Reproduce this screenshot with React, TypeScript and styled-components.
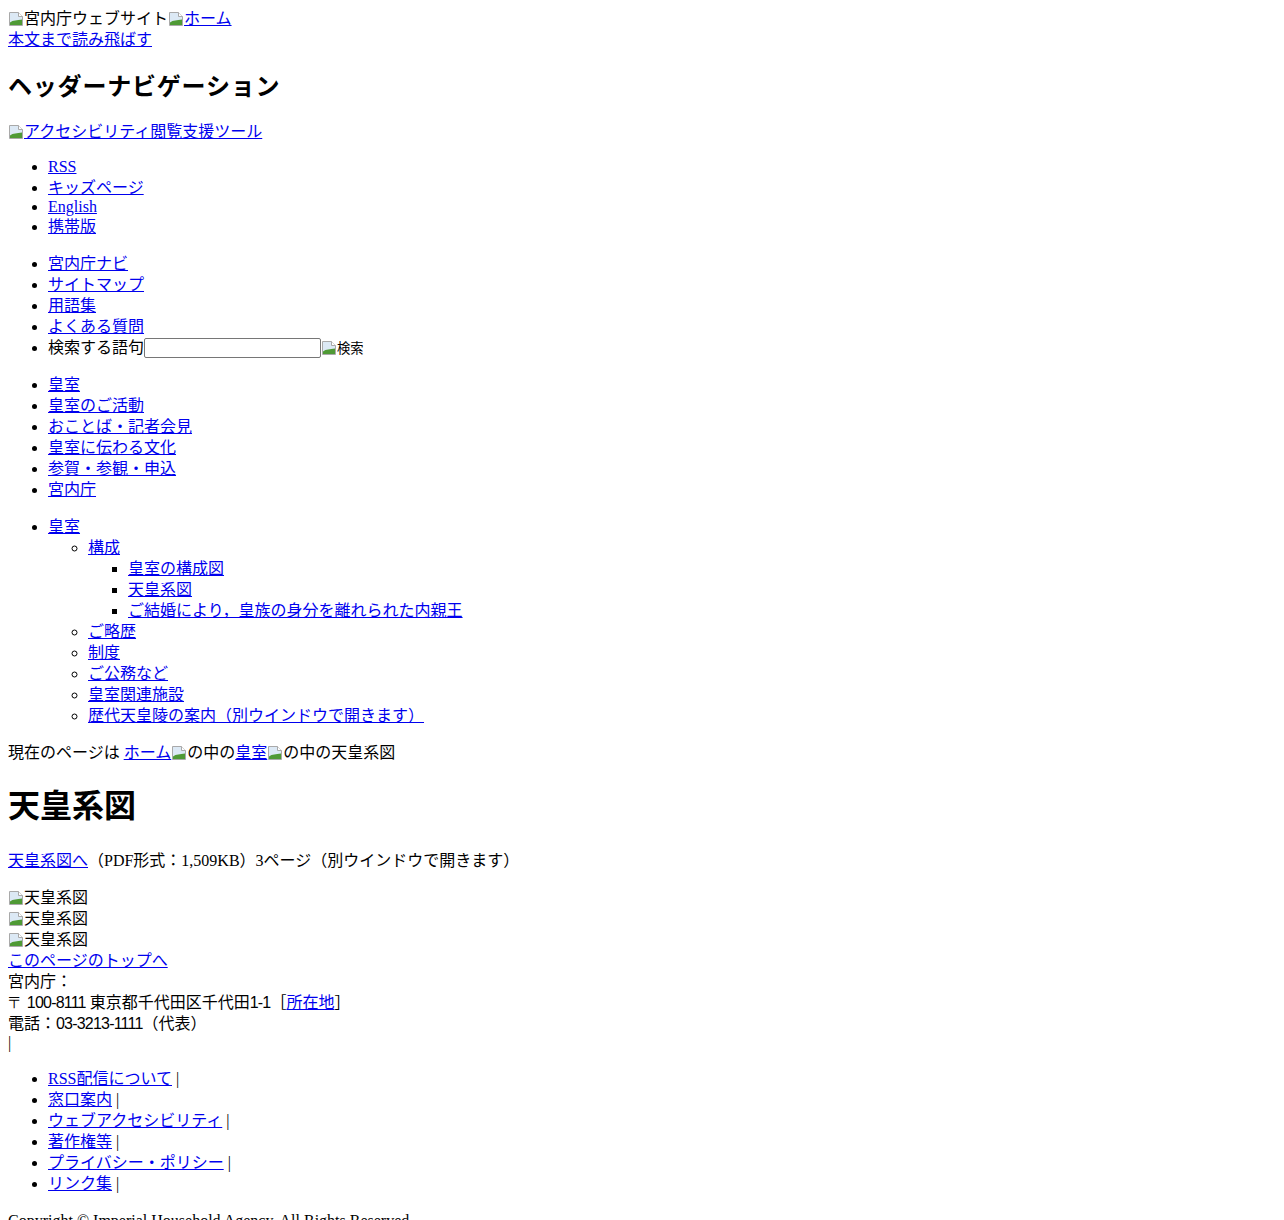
import { createGlobalStyle, styled } from "styled-components";

const GlobalStyle = createGlobalStyle`
  body {
    margin: 8px;
    font-family: "Liberation Serif", "Noto Sans CJK JP", serif;
    font-size: 16px;
    line-height: 1.3125;
    color: #000000;
    background: #ffffff;
  }
`;

const mainNav = ["皇室", "皇室のご活動", "おことば・記者会見", "皇室に伝わる文化", "参賀・参観・申込", "宮内庁"];

const subNav = ["ご略歴", "制度", "ご公務など", "皇室関連施設", "歴代天皇陵の案内（別ウインドウで開きます）"];

const footerLinks = ["RSS配信について", "窓口案内", "ウェブアクセシビリティ", "著作権等", "プライバシー・ポリシー", "リンク集"];

function BrokenIcon() {
  return (
    <svg width="16" height="16" viewBox="0 0 16 16" aria-hidden="true">
      <path d="M1.5 1.5H10.5L14.5 5.5V14.5H1.5Z" fill="#dce9f5" stroke="#a9a9a9" />
      <path d="M10.5 1.5V5.5H14.5" fill="#ffffff" stroke="#a9a9a9" />
      <path d="M2 14V11.5C5 9 9 9.5 14 8.5V14Z" fill="#4f9a35" />
    </svg>
  );
}

function Missing({ alt }: { alt: string }) {
  return (
    <Alt>
      <BrokenIcon />
      <AltText>{alt}</AltText>
    </Alt>
  );
}

export default function App() {
  return (
    <>
      <GlobalStyle />
      <TopBar>
        <Missing alt="宮内庁ウェブサイト" />
        <Link href="#">
          <Missing alt="ホーム" />
        </Link>
      </TopBar>
      <Link href="#">本文まで読み飛ばす</Link>

      <NavHeading>ヘッダーナビゲーション</NavHeading>

      <Para>
        <Link href="#">
          <Missing alt="アクセシビリティ閲覧支援ツール" />
        </Link>
      </Para>

      <List>
        <Item $latin><Link href="#">RSS</Link></Item>
        <Item><Link href="#">キッズページ</Link></Item>
        <Item $latin><Link href="#">English</Link></Item>
        <Item><Link href="#">携帯版</Link></Item>
      </List>

      <List>
        <Item><Link href="#">宮内庁ナビ</Link></Item>
        <Item><Link href="#">サイトマップ</Link></Item>
        <Item><Link href="#">用語集</Link></Item>
        <Item><Link href="#">よくある質問</Link></Item>
        <Item>
          <label htmlFor="q">検索する語句</label>
          <SearchInput id="q" type="text" />
          <SearchButton type="button">
            <Missing alt="検索" />
          </SearchButton>
        </Item>
      </List>

      <List>
        {mainNav.map((item) => (
          <Item key={item}>
            <Link href="#">{item}</Link>
          </Item>
        ))}
      </List>

      <List>
        <Item>
          <Link href="#">皇室</Link>
          <SubList $marker="circle">
            <Item>
              <Link href="#">構成</Link>
              <SubList $marker="square">
                <Item><Link href="#">皇室の構成図</Link></Item>
                <Item><Link href="#">天皇系図</Link></Item>
                <Item><Link href="#">ご結婚により，皇族の身分を離れられた内親王</Link></Item>
              </SubList>
            </Item>
            {subNav.map((item) => (
              <Item key={item}>
                <Link href="#">{item}</Link>
              </Item>
            ))}
          </SubList>
        </Item>
      </List>

      <Breadcrumb>
        現在のページは <Link href="#">ホーム</Link>
        <Missing alt="の中の" />
        <Link href="#">皇室</Link>
        <Missing alt="の中の" />
        天皇系図
      </Breadcrumb>

      <Title>天皇系図</Title>

      <Para>
        <Link href="#">天皇系図へ</Link>（PDF形式：1,509KB）3ページ（別ウインドウで開きます）
      </Para>

      <Figure><Missing alt="天皇系図" /></Figure>
      <Figure><Missing alt="天皇系図" /></Figure>
      <Figure><Missing alt="天皇系図" /></Figure>

      <div>
        <Link href="#">このページのトップへ</Link>
      </div>

      <Footer>
        <div>宮内庁：</div>
        <div>
          <Digits>〒 100-8111</Digits> 東京都千代田区千代田<Digits>1-1</Digits>［<Link href="#">所在地</Link>］
        </div>
        <div>
          電話：<Digits>03-3213-1111</Digits>（代表）
        </div>
        <Separator>|</Separator>
        <List>
          {footerLinks.map((item) => (
            <Item key={item}>
              <Link href="#">{item}</Link> |
            </Item>
          ))}
        </List>
        <Para>Copyright © Imperial Household Agency. All Rights Reserved.</Para>
      </Footer>
    </>
  );
}

const TopBar = styled.div`
  display: block;
`;

const Alt = styled.span`
  display: inline;

  svg {
    vertical-align: -3px;
  }
`;

const AltText = styled.span``;

const Link = styled.a`
  color: #0000ee;
  text-decoration: underline;
`;

const NavHeading = styled.h2`
  font-size: 1.5em;
  font-weight: bold;
  letter-spacing: 0.8px;
  margin: 0.83em 0 calc(0.83em - 2px);
  padding-top: 2px;
`;

const Para = styled.p`
  margin: 1em 0;
`;

const List = styled.ul`
  margin: 1em 0;
  padding-left: 40px;
  list-style: disc;
`;

const SubList = styled.ul<{ $marker: string }>`
  margin: 0;
  padding-left: 40px;
  list-style: ${(p) => p.$marker};
`;

const Item = styled.li<{ $latin?: boolean }>`
  line-height: ${(p) => (p.$latin ? "1.15" : "1.3125")};
`;

const SearchInput = styled.input`
  box-sizing: border-box;
  width: 177px;
  height: 20px;
  margin: 1px 0 0;
  padding: 1px 2px;
  border: 1px solid #767676;
  border-radius: 2px;
  font-size: 13.33px;
  font-family: "Liberation Sans", sans-serif;
  vertical-align: top;
`;

const SearchButton = styled.button`
  border: none;
  background: none;
  padding: 0;
  margin: 0;
  font-size: 13.33px;
  line-height: 1.3125;
  font-family: "Noto Sans CJK JP", sans-serif;
  color: #000000;
  cursor: pointer;
  vertical-align: baseline;
`;

const Breadcrumb = styled.div`
  display: block;
`;

const Title = styled.h1`
  font-size: 2em;
  font-weight: bold;
  margin: 0.67em 0 calc(0.67em + 2px);
`;

const Figure = styled.div`
  display: block;
`;

const Footer = styled.div`
  display: block;
`;

const Separator = styled.div`
  line-height: 1.15;
`;

const Digits = styled.span`
  font-family: "Liberation Sans Narrow", "Liberation Sans", sans-serif;
  letter-spacing: -0.8px;
`;
